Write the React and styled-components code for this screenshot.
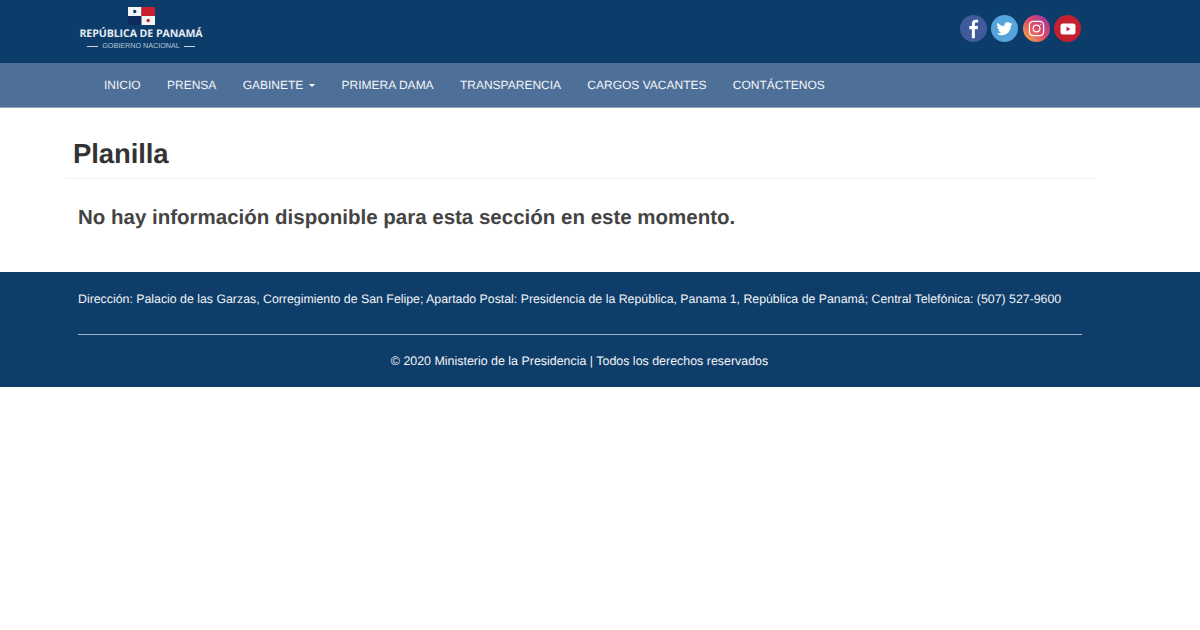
import React from "react";
import styled, { createGlobalStyle } from "styled-components";

const Global = createGlobalStyle`
  html, body { margin: 0; padding: 0; background: #fff; }
  body { font-family: "Liberation Sans", Arial, sans-serif; color: #333; text-rendering: geometricPrecision; }
`;
const Page = styled.div`width: 1200px; height: 630px; overflow: hidden; background: #fff;`;
const Header = styled.header`
  height: 63px; background: #0c3c6a; display: flex; justify-content: space-between;
  padding: 0 119px 0 79px; box-sizing: border-box;
`;
const Logo = styled.div`
  width: 124px; display: flex; flex-direction: column; align-items: center; padding-top: 7px; color: #fff;
`;
const LogoName = styled.div`
  font-size: 10.6px; line-height: 12px; font-weight: 700; white-space: nowrap; margin-top: 3px; color: #e6ecf2; font-family: "Open Sans", sans-serif; letter-spacing: -0.08px;
`;
const LogoSub = styled.div`
  display: flex; align-items: center; gap: 4px; font-size: 7.2px; line-height: 8px; color: #b9c7d6; white-space: nowrap; margin-top: 2px;
  &::before, &::after { content: ""; width: 11px; height: 1px; background: #c9d4e0; }
`;
const Socials = styled.div`display: flex; gap: 4.5px; padding-top: 15px;`;
const Social = styled.a`
  width: 27px; height: 27px; border-radius: 50%; background: ${p => p.$bg}; display: flex; align-items: center; justify-content: center;
`;
const Nav = styled.nav`
  height: 45px; background: #4e6f97; border-bottom: 1px solid #8ba8bd; box-sizing: border-box; display: flex; align-items: center; padding-left: 104px; gap: 26.3px;
`;
const NavItem = styled.a`
  color: #f4f6f9; font-size: 12px; white-space: nowrap; display: flex; align-items: center; gap: 6px; line-height: 20px;
`;
const Caret = styled.span`
  width: 0; height: 0; border-left: 3.5px solid transparent; border-right: 3.5px solid transparent; border-top: 3.5px solid #fff; margin-top: 1px;
`;
const Main = styled.main`height: 164px; box-sizing: border-box; padding: 0 104px 0 65px;`;
const TitleBar = styled.div`height: 71px; box-sizing: border-box; border-bottom: 1px solid #f2f2f2; padding: 29px 0 0 8px;`;
const Title = styled.h1`margin: 0; font-size: 27.5px; line-height: 33px; font-weight: 700; color: #333; letter-spacing: -0.1px;`;
const Message = styled.p`margin: 26px 0 0 13px; font-size: 20.5px; line-height: 26px; font-weight: 700; color: #444;`;
const Footer = styled.footer`height: 115px; background: #0e3d69; color: #f2f4f7; box-sizing: border-box; padding: 19px 118px 0 78px;`;
const Address = styled.div`height: 43px; font-size: 12.34px; line-height: 17px; white-space: nowrap; border-bottom: 1px solid #9db4cd;`;
const Copy = styled.div`text-align: center; font-size: 12.43px; line-height: 17px; margin-top: 18px; padding-right: 1px;`;

const Flag = () => (
  <svg width="27" height="18" viewBox="0 0 27 18">
    <rect width="13.5" height="9" fill="#f3f4f6" />
    <rect x="13.5" width="13.5" height="9" fill="#c8202f" />
    <rect y="9" width="13.5" height="9" fill="#0f2c5c" />
    <rect x="13.5" y="9" width="13.5" height="9" fill="#f3f4f6" />
    <circle cx="6.7" cy="4.5" r="1.7" fill="#123a6e" />
    <circle cx="20.2" cy="13.5" r="1.7" fill="#c8202f" />
  </svg>
);
const Facebook = () => (
  <svg width="27" height="27" viewBox="0 0 28 28"><path fill="#fff" d="M15.4 24v-9.300h2.900l.4-3.300h-3.300V9.500c0-1 .3-1.600 1.600-1.600h1.800V5c-.3 0-1.300-.1-2.400-.1-2.500 0-4.100 1.500-4.100 4.200v2.300H9.700v3.300h2.600V24z"/></svg>
);
const Twitter = () => (
  <svg width="19" height="19" viewBox="0 0 24 24"><path fill="#fff" d="M22 5.900c-.7.300-1.500.6-2.400.7.900-.5 1.500-1.300 1.800-2.300-.8.500-1.700.8-2.600 1a4.100 4.100 0 0 0-7 3.700C8.400 8.800 5.400 7.200 3.400 4.700a4.100 4.100 0 0 0 1.300 5.500c-.7 0-1.300-.2-1.900-.5 0 2 1.400 3.700 3.300 4.100-.6.200-1.200.2-1.900.1.500 1.600 2 2.800 3.800 2.800A8.200 8.200 0 0 1 2 18.400 11.600 11.600 0 0 0 20 8.100c.8-.6 1.500-1.300 2-2.200z"/></svg>
);
const Instagram = () => (
  <svg width="17" height="17" viewBox="0 0 18 18" fill="none" stroke="#fff" strokeWidth="1.300"><rect x="1.500" y="1.500" width="15" height="15" rx="4"/><circle cx="9" cy="9" r="3.600"/><circle cx="13.400" cy="4.600" r=".5" fill="#fff" strokeWidth=".5"/></svg>
);
const YouTube = () => (
  <svg width="16" height="12" viewBox="0 0 16 12"><rect x="0.500" y="0.500" width="15" height="11" rx="2.500" fill="#fff"/><path d="M6.500 3.700v4.600L10.500 6z" fill="#c4202f"/></svg>
);

const items = ["INICIO", "PRENSA", "GABINETE", "PRIMERA DAMA", "TRANSPARENCIA", "CARGOS VACANTES", "CONTÁCTENOS"];

export default function App() {
  return (
    <Page>
      <Global />
      <Header>
        <Logo>
          <Flag />
          <LogoName>REPÚBLICA DE PANAMÁ</LogoName>
          <LogoSub>GOBIERNO NACIONAL</LogoSub>
        </Logo>
        <Socials>
          <Social $bg="#3f5b9b"><Facebook /></Social>
          <Social $bg="#55a5dc"><Twitter /></Social>
          <Social $bg="linear-gradient(45deg,#f2a04a 10%,#e0486a 50%,#a03a9c 90%)"><Instagram /></Social>
          <Social $bg="#c4202f"><YouTube /></Social>
        </Socials>
      </Header>
      <Nav>
        {items.map(t => (
          <NavItem key={t}>{t}{t === "GABINETE" && <Caret />}</NavItem>
        ))}
      </Nav>
      <Main>
        <TitleBar><Title>Planilla</Title></TitleBar>
        <Message>No hay información disponible para esta sección en este momento.</Message>
      </Main>
      <Footer>
        <Address>Dirección: Palacio de las Garzas, Corregimiento de San Felipe; Apartado Postal: Presidencia de la República, Panama 1, República de Panamá; Central Telefónica: (507) 527-9600</Address>
        <Copy>© 2020 Ministerio de la Presidencia | Todos los derechos reservados</Copy>
      </Footer>
    </Page>
  );
}
